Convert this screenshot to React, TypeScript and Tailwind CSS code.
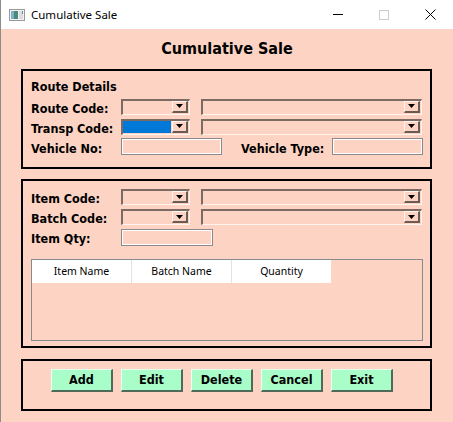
import React from "react";

const LBL = "font-['DejaVu_Sans_Condensed','DejaVu_Sans',sans-serif] [font-stretch:condensed] font-bold text-[12.5px] text-black leading-none";

function Tri() {
  return (
    <svg width="7" height="4" viewBox="0 0 7 4" className="block">
      <path d="M0 0H7L3.5 4Z" fill="#000" />
    </svg>
  );
}

function Combo({ w, selected }: { w: string; selected?: boolean }) {
  return (
    <div className={`${w} h-[16px] box-border flex items-stretch border-t-2 border-l-2 border-b border-r border-t-[#7c6a63] border-l-[#7c6a63] border-b-[#fff3ee] border-r-[#fff3ee] bg-[#fdd3c3]`}>
      <div className="flex-1 flex items-stretch pr-[1px]">
        {selected ? <div className="flex-1 bg-[#0078d7] mb-[1px]" /> : null}
      </div>
      <div className="w-[16px] mr-[1px] mb-[1px] box-border flex items-center justify-center border-t border-l border-b-2 border-r-2 border-t-[#fff6f2] border-l-[#fff6f2] border-b-[#6b5b55] border-r-[#6b5b55] bg-[#fdd3c3]">
        <Tri />
      </div>
    </div>
  );
}

function TextBox({ w }: { w: string }) {
  return (
    <div className={`${w} h-[17px] box-border border border-[#8a8a8a] shadow-[inset_1px_1px_0_#ffffff,inset_-1px_-1px_0_#ffffff] bg-[#fdd3c3]`} />
  );
}

function Btn({ label }: { label: string }) {
  return (
    <div className="w-[62px] h-[23px] box-border flex items-center justify-center bg-[#a9fdc9] border-t border-l border-b-2 border-r-2 border-t-[#e6fff0] border-l-[#e6fff0] border-b-[#4f6a58] border-r-[#4f6a58]">
      <span className={LBL}>{label}</span>
    </div>
  );
}

function WinIcon() {
  return (
    <svg width="16" height="12" viewBox="0 0 16 12" className="block">
      <rect x="0.5" y="0.5" width="15" height="11" fill="#f2f2f2" stroke="#9a9a9a" />
      <rect x="2" y="2" width="7" height="8" fill="#4a8a78" />
      <rect x="2" y="2" width="3" height="8" fill="#7fb0c8" />
      <rect x="10" y="2" width="4" height="8" fill="#dcdcdc" />
      <rect x="13" y="2" width="1" height="3" fill="#6a8aa0" />
    </svg>
  );
}

export default function App() {
  return (
    <div className="w-[453px] h-[422px] bg-[#fdd3c3] border-l border-[#8c8c8c] box-border flex flex-col overflow-hidden">
      {/* Title bar */}
      <div className="h-[29px] bg-white flex items-center shrink-0">
        <div className="ml-[8px] mr-[6px]"><WinIcon /></div>
        <span className="font-['Noto_Sans',sans-serif] text-[11.5px] text-black leading-none">Cumulative Sale</span>
        <div className="ml-auto flex items-center h-full">
          <div className="w-[46px] h-full flex items-center justify-center">
            <div className="w-[10px] h-[1px] bg-black" />
          </div>
          <div className="w-[46px] h-full flex items-center justify-center">
            <div className="w-[10px] h-[10px] border border-[#cccccc]" />
          </div>
          <div className="w-[46px] h-full flex items-center justify-center">
            <svg width="11" height="11" viewBox="0 0 11 11" className="block">
              <path d="M0.5 0.5L10.5 10.5M10.5 0.5L0.5 10.5" stroke="#000" strokeWidth="1" />
            </svg>
          </div>
        </div>
      </div>

      {/* Heading */}
      <div className="h-[40px] flex items-center justify-center shrink-0">
        <span className="font-['DejaVu_Sans_Condensed','DejaVu_Sans',sans-serif] [font-stretch:condensed] font-bold text-[16px] text-black leading-none">Cumulative Sale</span>
      </div>

      {/* Route details box */}
      <div className="ml-[20px] w-[411px] h-[100px] box-border border-2 border-black pl-[8px] pt-[8px] flex flex-col shrink-0">
        <div className="h-[17px] flex items-center"><span className={LBL}>Route Details</span></div>
        <div className="mt-[2px] flex flex-col gap-[3px]">
          <div className="h-[17px] flex items-center">
            <div className="w-[90px]"><span className={LBL}>Route Code:</span></div>
            <Combo w="w-[69px]" />
            <div className="w-[11px]" />
            <Combo w="w-[221px]" />
          </div>
          <div className="h-[17px] flex items-center">
            <div className="w-[90px]"><span className={LBL}>Transp Code:</span></div>
            <Combo w="w-[69px]" selected />
            <div className="w-[11px]" />
            <Combo w="w-[221px]" />
          </div>
          <div className="h-[17px] flex items-center">
            <div className="w-[90px]"><span className={LBL}>Vehicle No:</span></div>
            <TextBox w="w-[101px]" />
            <div className="w-[19px]" />
            <div className="w-[91px]"><span className={LBL}>Vehicle Type:</span></div>
            <TextBox w="w-[91px]" />
          </div>
        </div>
      </div>

      {/* Item box */}
      <div className="mt-[10px] ml-[20px] w-[411px] h-[169px] box-border border-2 border-black pl-[8px] pt-[8px] flex flex-col shrink-0">
        <div className="flex flex-col gap-[4px]">
          <div className="h-[16px] flex items-center">
            <div className="w-[90px]"><span className={LBL}>Item Code:</span></div>
            <Combo w="w-[69px]" />
            <div className="w-[11px]" />
            <Combo w="w-[221px]" />
          </div>
          <div className="h-[16px] flex items-center">
            <div className="w-[90px]"><span className={LBL}>Batch Code:</span></div>
            <Combo w="w-[69px]" />
            <div className="w-[11px]" />
            <Combo w="w-[221px]" />
          </div>
          <div className="h-[16px] flex items-center">
            <div className="w-[90px]"><span className={LBL}>Item Qty:</span></div>
            <TextBox w="w-[92px]" />
          </div>
        </div>
        <div className="mt-[14px] w-[392px] h-[82px] box-border border border-[#8a8a8a] flex flex-col">
          <div className="h-[23px] flex">
            <div className="w-[100px] bg-white border-r border-[#e3e3e3] flex items-center justify-center font-['Noto_Sans',sans-serif] text-[10.5px] text-black">Item Name</div>
            <div className="w-[100px] bg-white border-r border-[#e3e3e3] flex items-center justify-center font-['Noto_Sans',sans-serif] text-[10.5px] text-black">Batch Name</div>
            <div className="w-[99px] bg-white flex items-center justify-center font-['Noto_Sans',sans-serif] text-[10.5px] text-black">Quantity</div>
          </div>
        </div>
      </div>

      {/* Buttons box */}
      <div className="mt-[11px] ml-[20px] w-[411px] h-[52px] box-border border-2 border-black pl-[28px] pt-[8px] flex gap-[8px] shrink-0">
        <Btn label="Add" />
        <Btn label="Edit" />
        <Btn label="Delete" />
        <Btn label="Cancel" />
        <Btn label="Exit" />
      </div>
    </div>
  );
}
